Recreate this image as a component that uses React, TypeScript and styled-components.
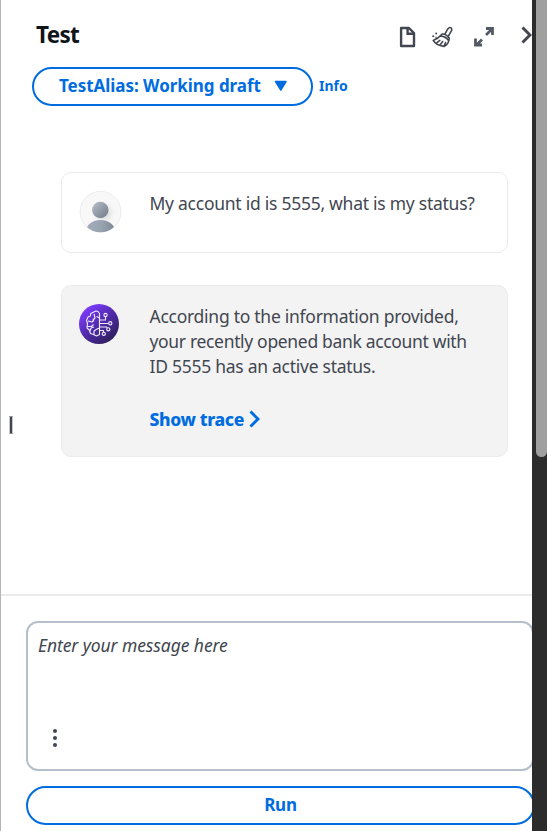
import React from 'react';
import styled, { createGlobalStyle } from 'styled-components';

const blue = '#006ce0';
const ink = '#424650';

const GlobalStyle = createGlobalStyle`
  * { box-sizing: border-box; }
  body { margin: 0; background: #fff; overflow: hidden; }
  button, textarea { font: inherit; letter-spacing: inherit; }
`;

const Shell = styled.div`
  display: flex;
  width: 547px;
  height: 831px;
  overflow: hidden;
  font-family: 'Noto Sans', 'Open Sans', sans-serif;
  color: ${ink};
`;

const Panel = styled.main`
  display: flex;
  flex-direction: column;
  width: 532px;
  flex: none;
  border-left: 1px solid #b4b4bb;
  background: #fff;
  overflow: hidden;
`;

const ScrollTrack = styled.aside`
  width: 15px;
  flex: none;
  padding-left: 4px;
  background: #2c2c2c;
`;

const ScrollThumb = styled.div`
  height: 457px;
  background: #9f9f9f;
  border-radius: 0 0 6px 6px;
`;

const Header = styled.header`
  display: flex;
  height: 67px;
  padding-left: 35px;
  flex: none;
`;

const Title = styled.h1`
  margin: 19px 0 0;
  width: 363px;
  font-size: 22.5px;
  line-height: 31px;
  font-weight: 700;
  letter-spacing: -0.7px;
  color: #0f141a;
`;

const Tools = styled.div`
  display: flex;
  flex: none;
  padding-top: 25px;
  svg { flex: none; display: block; }
`;

const ToolButton = styled.button<{ $gap?: number }>`
  display: block;
  padding: 0;
  margin: 0 ${p => p.$gap ?? 0}px 0 0;
  border: 0;
  height: 24px;
  background: none;
  color: ${ink};
`;

const CloseButton = styled(ToolButton)`
  height: 20px;
`;

const AliasRow = styled.div`
  display: flex;
  align-items: center;
  height: 39px;
  padding-left: 31px;
  flex: none;
`;

const PillButton = styled.button<{ $width: number; $indent?: number }>`
  display: flex;
  align-items: center;
  justify-content: ${p => (p.$indent ? 'flex-start' : 'center')};
  flex: none;
  width: ${p => p.$width}px;
  height: 39px;
  padding: 0 0 2px ${p => p.$indent ?? 0}px;
  border: 2px solid ${blue};
  border-radius: 20px;
  background: #fff;
  color: ${blue};
  font-size: 17px;
  font-weight: 700;
  letter-spacing: -0.2px;
  white-space: nowrap;
`;

const AliasLabel = styled.span`
  width: 202px;
  letter-spacing: -0.04px;
  text-align: left;
  margin-right: 13px;
`;

const InfoLink = styled.a`
  margin: 0 0 2px 6px;
  color: ${blue};
  font-size: 14px;
  font-weight: 700;
`;

const Conversation = styled.section`
  display: flex;
  flex-direction: column;
  gap: 32px;
  height: 488px;
  flex: none;
  padding: 66px 0 0 60px;
`;

const Message = styled.article<{ $height: number; $shaded?: boolean }>`
  display: flex;
  width: 447px;
  height: ${p => p.$height}px;
  padding: 18px 0 0 17px;
  border: 1px solid #e9ebed;
  border-radius: 10px;
  background: ${p => (p.$shaded ? '#f3f3f3' : '#fff')};
  svg { flex: none; display: block; }
`;

const MessageBody = styled.div`
  margin-left: 27.5px;
  white-space: nowrap;
`;

const Line = styled.p<{ $spacing: number }>`
  margin: 0;
  font-size: 17.5px;
  line-height: 25px;
  letter-spacing: ${p => p.$spacing}px;
`;

const TraceButton = styled.button`
  display: flex;
  align-items: center;
  height: 25px;
  margin: 27px 0 0;
  padding: 0;
  border: 0;
  background: none;
  color: ${blue};
  font-size: 17.5px;
  font-weight: 800;
  letter-spacing: -0.35px;
  svg { margin: 1px 0 0 4.5px; }
`;

const Composer = styled.footer`
  height: 237px;
  flex: none;
  padding: 25px 0 0 25px;
  border-top: 2px solid #ebebeb;
`;

const MessageBox = styled.div`
  display: flex;
  flex-direction: column;
  justify-content: space-between;
  width: 508px;
  height: 150px;
  margin-bottom: 15px;
  padding: 9px 0 21px 10px;
  border: 2px solid #b4bfcb;
  border-radius: 12px;
`;

const Placeholder = styled.span`
  font-size: 17.5px;
  line-height: 26px;
  font-style: italic;
  letter-spacing: -0.08px;
`;

const MoreButton = styled.button`
  width: 6px;
  height: 20px;
  margin-left: 14px;
  padding: 0;
  border: 0;
  background: none;
  svg { display: block; }
`;

const Handle = styled.div`
  position: absolute;
  left: 9px;
  top: 416px;
  width: 4px;
  height: 18px;
  border: 1px solid #c6c8cf;
  border-top-color: #8a8d96;
  border-bottom-color: #8a8d96;
  background: ${ink};
`;

const FileIcon = () => (
  <svg width="18" height="24" viewBox="0 0 18 24" fill="none" stroke={ink} strokeWidth="2.4">
    <path d="M2.1 3h7.8l5.1 5.2V21H2.1z" strokeLinejoin="round" />
    <path d="M8.6 3v5.8H15" />
  </svg>
);

const BroomIcon = () => (
  <svg width="22" height="24" viewBox="0 0 22 24" fill="none" stroke={ink} strokeWidth="1.6" strokeLinecap="round" strokeLinejoin="round">
    <path d="M12.8 9.2 16 3.7q1.4-1.9 3.2-.7 1.1 1.2.3 2.6l-3.4 6" />
    <path d="M10.2 9.1q4-.4 7.1 4.2M10.2 9.1Q6.3 13.7 1.2 15.4q2.7 4.9 10.8 6 4.8-2 5.3-8.1M9 11.1q4.8.3 7.5 4.4M4.9 17.6l3-2.2M8.2 19.7l2.5-3.2M12.1 20.8l1.5-3.3" />
    <g fill={ink} stroke="none"><circle cx="4.2" cy="8.6" r="1" /><circle cx="1.2" cy="11.3" r="1" /><circle cx="4" cy="12.2" r=".7" /></g>
  </svg>
);

const ExpandIcon = () => (
  <svg width="22" height="24" viewBox="0 0 22 24" fill="none" stroke="#545a64" strokeWidth="2.8">
    <path d="M13 3.5h6.5V10M19 4l-6 6M9 14.5l-5.5 5.5M2.5 13.5V20H9" />
  </svg>
);

const Chevron = ({ width, height, weight }: { width: number; height: number; weight: number }) => (
  <svg width={width} height={height} viewBox="0 0 11 18" fill="none" stroke="currentColor" strokeWidth={weight}>
    <path d="M1.5 1.5 9 9l-7.5 7.5" />
  </svg>
);

const UserAvatar = () => (
  <svg width="43" height="43" viewBox="0 0 43 43">
    <defs>
      <linearGradient id="head" x1="0" y1="0" x2="1" y2="1">
        <stop stopColor="#b7c0cb" /><stop offset="1" stopColor="#707987" />
      </linearGradient>
      <linearGradient id="body">
        <stop stopColor="#a2adbb" /><stop offset=".55" stopColor="#98a3b0" /><stop offset="1" stopColor="#7e8794" />
      </linearGradient>
      <radialGradient id="shade">
        <stop offset=".3" stopColor="#dfe0e2" /><stop offset="1" stopColor="#f8f8f8" stopOpacity="0" />
      </radialGradient>
      <clipPath id="round"><circle cx="21.5" cy="20.8" r="20.4" /></clipPath>
    </defs>
    <circle cx="21.5" cy="20.8" r="20.4" fill="#f8f8f8" stroke="#ececec" />
    <circle cx="25" cy="22" r="14" fill="url(#shade)" />
    <circle cx="21.3" cy="19" r="8.2" fill="url(#head)" />
    <ellipse cx="21.5" cy="39" rx="14" ry="10" fill="url(#body)" clipPath="url(#round)" />
  </svg>
);

const AgentAvatar = () => (
  <svg width="43" height="40" viewBox="1 0 43 40" fill="none">
    <defs>
      <linearGradient id="purple" x1=".15" y1=".1" x2=".8" y2=".9">
        <stop stopColor="#7f3cff" /><stop offset=".5" stopColor="#512bad" /><stop offset="1" stopColor="#30205f" />
      </linearGradient>
    </defs>
    <circle cx="21" cy="20" r="20" fill="url(#purple)" />
    <g stroke="#eee8ff" strokeWidth="1.15" strokeLinejoin="round">
      <path d="M21.5 9.5v21l-3 1.5-3-1.5-3-1-1.2-3.5-2.3-2 .5-4.5-1-3 1.5-3.5 2.3-1 .5-2.5 3-1.5 2.2-1 2 .5zM16 10l1 4-2.5 2.5M10 17l4 1 2-1.5M9 22.5h4.5l2-2M12 27l1-3 3-1M16 30.5V27l3-2 2.5-1M21.5 14l-3-1.5" />
      <path d="M21.5 16h6v-3.3M21.5 19.5h9M21.5 23h7l.8.8M21.5 26.5h4v2" />
      <circle cx="27.5" cy="11" r="1.6" /><circle cx="32.3" cy="19.2" r="1.6" /><circle cx="30.3" cy="25.3" r="1.6" /><circle cx="25.8" cy="29.8" r="1.6" />
    </g>
  </svg>
);

export default function App() {
  return (
    <Shell>
      <GlobalStyle />
      <Panel>
        <Header>
          <Title>Test</Title>
          <Tools>
            <ToolButton $gap={15} aria-label="Summary"><FileIcon /></ToolButton>
            <ToolButton $gap={19} aria-label="Clear"><BroomIcon /></ToolButton>
            <ToolButton $gap={26} aria-label="Expand"><ExpandIcon /></ToolButton>
            <CloseButton aria-label="Close panel"><Chevron width={11} height={18} weight={2.9} /></CloseButton>
          </Tools>
        </Header>
        <AliasRow>
          <PillButton $width={281} $indent={25}>
            <AliasLabel>TestAlias: Working draft</AliasLabel>
            <svg width="14" height="12" viewBox="0 0 14 12"><path d="M1.5 1.5h10.5L6.8 10z" fill={blue} stroke={blue} strokeWidth="1.5" strokeLinejoin="round" /></svg>
          </PillButton>
          <InfoLink>Info</InfoLink>
        </AliasRow>
        <Conversation>
          <Message $height={81}>
            <UserAvatar />
            <MessageBody><Line $spacing={-0.26}>My account id is 5555, what is my status?</Line></MessageBody>
          </Message>
          <Message $height={172} $shaded>
            <AgentAvatar />
            <MessageBody>
              <Line $spacing={-0.27}>According to the information provided,</Line>
              <Line $spacing={-0.33}>your recently opened bank account with</Line>
              <Line $spacing={-0.27}>ID 5555 has an active status.</Line>
              <TraceButton>Show trace<Chevron width={11} height={18} weight={2.9} /></TraceButton>
            </MessageBody>
          </Message>
        </Conversation>
        <Composer>
          <MessageBox>
            <Placeholder>Enter your message here</Placeholder>
            <MoreButton aria-label="More options">
              <svg width="6" height="20" viewBox="0 0 6 20" fill={ink}><circle cx="3" cy="3" r="2" /><circle cx="3" cy="10" r="2" /><circle cx="3" cy="17" r="2" /></svg>
            </MoreButton>
          </MessageBox>
          <PillButton $width={509}>Run</PillButton>
        </Composer>
      </Panel>
      <ScrollTrack><ScrollThumb /></ScrollTrack>
      <Handle />
    </Shell>
  );
}
